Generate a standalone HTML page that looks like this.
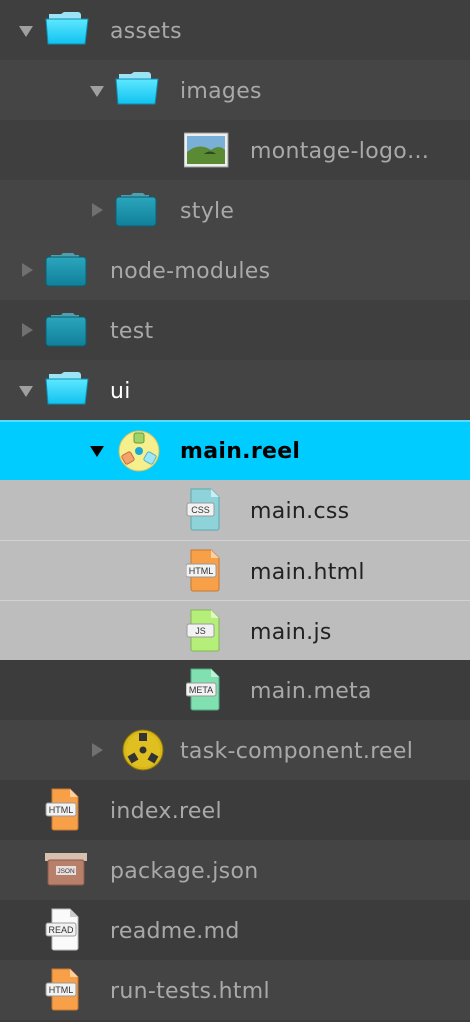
<!DOCTYPE html><html><head><style>
body{margin:0;width:470px;height:1022px;background:#3c3c3c;overflow:hidden;font-family:"DejaVu Sans","Liberation Sans",sans-serif;}
.r{position:absolute;left:0;width:470px;height:60px;}
.a{background:#3f3f3f}.b{background:#454545}
.t{position:absolute;top:17px;font-size:22px;color:#a9a9a9;line-height:30px;letter-spacing:.3px}
.tri{position:absolute;width:0;height:0}
.down{border-left:7px solid transparent;border-right:7px solid transparent;border-top:11px solid #a0a0a0;top:26px}
.right{border-top:7px solid transparent;border-bottom:7px solid transparent;border-left:11px solid #707070;top:23px}
.ic{position:absolute;top:0}
.g{background:#bdbdbd;border-top:1px solid #d2d2d2}
</style></head><body>
<svg width="0" height="0" style="position:absolute"><defs>
<linearGradient id="fo" x1="0" y1="0" x2="0" y2="1"><stop offset="0" stop-color="#5ee8ff"/><stop offset="1" stop-color="#10c2f0"/></linearGradient>
<linearGradient id="fc" x1="0" y1="0" x2="0" y2="1"><stop offset="0" stop-color="#2aa6bd"/><stop offset="1" stop-color="#11809a"/></linearGradient>
</defs></svg>

<div class="r a" style="top:0"><div class="tri down" style="left:19px"></div>
<svg class="ic" style="left:43px" width="48" height="60"><path d="M6 14h12l3 -2h14a3 3 0 0 1 3 3v4H6z" fill="#9ce4f5"/><path d="M3 19h42l-3 25H5z" fill="url(#fo)" stroke="#0b8fb3" stroke-width="1"/></svg>
<div class="t" style="left:110px">assets</div></div>
<div class="r b" style="top:60px"><div class="tri down" style="left:90px"></div>
<svg class="ic" style="left:113px" width="48" height="60"><path d="M6 14h12l3 -2h14a3 3 0 0 1 3 3v4H6z" fill="#9ce4f5"/><path d="M3 19h42l-3 25H5z" fill="url(#fo)" stroke="#0b8fb3" stroke-width="1"/></svg>
<div class="t" style="left:180px">images</div></div>
<div class="r a" style="top:120px">
<svg class="ic" style="left:184px" width="46" height="60"><rect x="0" y="13" width="44" height="34" fill="#eee" stroke="#999"/><rect x="3" y="16" width="38" height="28" fill="#7ab0d8"/><path d="M3 32q12-10 24-2q8-6 14 0v14H3z" fill="#5b8a34"/><path d="M20 34q6-5 12 0z" fill="#2d4a20"/></svg>
<div class="t" style="left:250px">montage-logo…</div></div>
<div class="r b" style="top:180px"><div class="tri right" style="left:92px"></div>
<svg class="ic" style="left:113px" width="48" height="60"><path d="M8 15h10l2-2h10l2 2h4v4H8z" fill="#4f9fae"/><rect x="3" y="17" width="40" height="29" rx="3" fill="url(#fc)" stroke="#0a5f72"/></svg>
<div class="t" style="left:180px">style</div></div>
<div class="r" style="top:240px;background:#464646"><div class="tri right" style="left:22px"></div>
<svg class="ic" style="left:43px" width="48" height="60"><path d="M8 15h10l2-2h10l2 2h4v4H8z" fill="#4f9fae"/><rect x="3" y="17" width="40" height="29" rx="3" fill="url(#fc)" stroke="#0a5f72"/></svg>
<div class="t" style="left:110px">node-modules</div></div>
<div class="r" style="top:300px;background:#3f3f3f"><div class="tri right" style="left:22px"></div>
<svg class="ic" style="left:43px" width="48" height="60"><path d="M8 15h10l2-2h10l2 2h4v4H8z" fill="#4f9fae"/><rect x="3" y="17" width="40" height="29" rx="3" fill="url(#fc)" stroke="#0a5f72"/></svg>
<div class="t" style="left:110px">test</div></div>
<div class="r" style="top:360px;background:#444"><div class="tri down" style="left:19px"></div>
<svg class="ic" style="left:43px" width="48" height="60"><path d="M6 14h12l3 -2h14a3 3 0 0 1 3 3v4H6z" fill="#9ce4f5"/><path d="M3 19h42l-3 25H5z" fill="url(#fo)" stroke="#0b8fb3" stroke-width="1"/></svg>
<div class="t" style="left:110px;color:#fff">ui</div></div>
<div class="r" style="top:420px;background:#00ccff;border-top:2px solid #55ddff;height:58px"><div class="tri down" style="left:90px;border-top-color:#000;top:24px"></div>
<svg class="ic" style="left:118px;top:-2px" width="46" height="60"><circle cx="21" cy="31" r="20" fill="#f5ef8e" stroke="#cbc36a"/><rect x="16" y="13" width="10" height="10" rx="2" fill="#9ed468" stroke="#6a9a3a"/><rect x="5" y="33" width="10" height="10" rx="2" fill="#f4a46a" stroke="#c07040" transform="rotate(-30 10 38)"/><rect x="27" y="33" width="10" height="10" rx="2" fill="#9ee8f5" stroke="#60b0c0" transform="rotate(30 32 38)"/><circle cx="21" cy="31" r="4" fill="#1aa8d8"/></svg>
<div class="t" style="left:180px;color:#000;font-weight:bold;top:15px">main.reel</div></div>
<div class="r g" style="top:480px;height:60px;border-top:none">
<svg class="ic" style="left:186px" width="40" height="60"><path d="M5 9h20l8 8v31a2 2 0 0 1-2 2H7a2 2 0 0 1-2-2z" fill="#8fd3da" stroke="#5aa8b0"/><path d="M25 9v8h8" fill="#c8eef2"/><rect x="1" y="23" width="27" height="13" rx="2" fill="#f2f2f2" stroke="#999"/><text x="14.5" y="33" font-size="9" text-anchor="middle" fill="#333" font-family="Liberation Sans">CSS</text></svg>
<div class="t" style="left:250px;color:#222">main.css</div></div>
<div class="r g" style="top:540px;height:59px">
<svg class="ic" style="left:186px" width="40" height="60"><path d="M5 9h20l8 8v31a2 2 0 0 1-2 2H7a2 2 0 0 1-2-2z" fill="#f8a048" stroke="#c87830"/><path d="M25 9v8h8" fill="#fcd0a0"/><rect x="0" y="23" width="30" height="13" rx="2" fill="#f2f2f2" stroke="#999"/><text x="15" y="33" font-size="9" text-anchor="middle" fill="#333" font-family="Liberation Sans">HTML</text></svg>
<div class="t" style="left:250px;color:#222">main.html</div></div>
<div class="r g" style="top:600px;height:59px">
<svg class="ic" style="left:186px" width="40" height="60"><path d="M5 9h20l8 8v31a2 2 0 0 1-2 2H7a2 2 0 0 1-2-2z" fill="#b6ee7a" stroke="#80b850"/><path d="M25 9v8h8" fill="#e0f8c0"/><rect x="1" y="23" width="27" height="13" rx="2" fill="#f2f2f2" stroke="#999"/><text x="14.5" y="33" font-size="9" text-anchor="middle" fill="#333" font-family="Liberation Sans">JS</text></svg>
<div class="t" style="left:250px;color:#222">main.js</div></div>
<div class="r" style="top:660px;background:#3c3c3c">
<svg class="ic" style="left:186px" width="40" height="60"><path d="M5 9h20l8 8v31a2 2 0 0 1-2 2H7a2 2 0 0 1-2-2z" fill="#80e0b0" stroke="#50a880"/><path d="M25 9v8h8" fill="#c0f0d8"/><rect x="0" y="23" width="30" height="13" rx="2" fill="#f2f2f2" stroke="#999"/><text x="15" y="33" font-size="9" text-anchor="middle" fill="#333" font-family="Liberation Sans">META</text></svg>
<div class="t" style="left:250px">main.meta</div></div>
<div class="r" style="top:720px;background:#444"><div class="tri right" style="left:92px"></div>
<svg class="ic" style="left:122px" width="46" height="60"><circle cx="21" cy="30" r="20" fill="#d8b818" stroke="#8a7408"/><circle cx="21" cy="30" r="17" fill="#e0c020"/><rect x="17" y="13" width="8" height="8" fill="#333"/><rect x="7" y="34" width="8" height="8" fill="#333" transform="rotate(-30 11 38)"/><rect x="27" y="34" width="8" height="8" fill="#333" transform="rotate(30 31 38)"/><circle cx="21" cy="30" r="3.5" fill="#333"/></svg>
<div class="t" style="left:180px">task-component.reel</div></div>
<div class="r" style="top:780px;background:#3c3c3c">
<svg class="ic" style="left:44px" width="40" height="60"><path d="M8 9h18l8 8v31a2 2 0 0 1-2 2H10a2 2 0 0 1-2-2z" fill="#f8a048" stroke="#c87830"/><path d="M26 9v8h8" fill="#fcd0a0"/><rect x="2" y="23" width="30" height="13" rx="2" fill="#f2f2f2" stroke="#999"/><text x="17" y="33" font-size="9" text-anchor="middle" fill="#333" font-family="Liberation Sans">HTML</text></svg>
<div class="t" style="left:110px">index.reel</div></div>
<div class="r" style="top:840px;background:#444">
<svg class="ic" style="left:44px" width="44" height="60"><rect x="1" y="13" width="42" height="8" fill="#d8c0b0"/><rect x="4" y="20" width="36" height="25" rx="2" fill="#b8806a" stroke="#8a5a48"/><rect x="12" y="26" width="20" height="9" fill="#e8e0d8"/><text x="22" y="33" font-size="6.5" text-anchor="middle" fill="#335" font-family="Liberation Sans">JSON</text></svg>
<div class="t" style="left:110px">package.json</div></div>
<div class="r" style="top:900px;background:#3c3c3c">
<svg class="ic" style="left:44px" width="40" height="60"><path d="M8 9h18l8 8v31a2 2 0 0 1-2 2H10a2 2 0 0 1-2-2z" fill="#fafafa" stroke="#bbb"/><path d="M26 9v8h8" fill="#ccc"/><rect x="2" y="23" width="30" height="13" rx="2" fill="#f2f2f2" stroke="#999"/><text x="17" y="33" font-size="9" text-anchor="middle" fill="#333" font-family="Liberation Sans">READ</text></svg>
<div class="t" style="left:110px">readme.md</div></div>
<div class="r" style="top:960px;background:#444">
<svg class="ic" style="left:44px" width="40" height="60"><path d="M8 9h18l8 8v31a2 2 0 0 1-2 2H10a2 2 0 0 1-2-2z" fill="#f8a048" stroke="#c87830"/><path d="M26 9v8h8" fill="#fcd0a0"/><rect x="2" y="23" width="30" height="13" rx="2" fill="#f2f2f2" stroke="#999"/><text x="17" y="33" font-size="9" text-anchor="middle" fill="#333" font-family="Liberation Sans">HTML</text></svg>
<div class="t" style="left:110px">run-tests.html</div></div>
</body></html>
